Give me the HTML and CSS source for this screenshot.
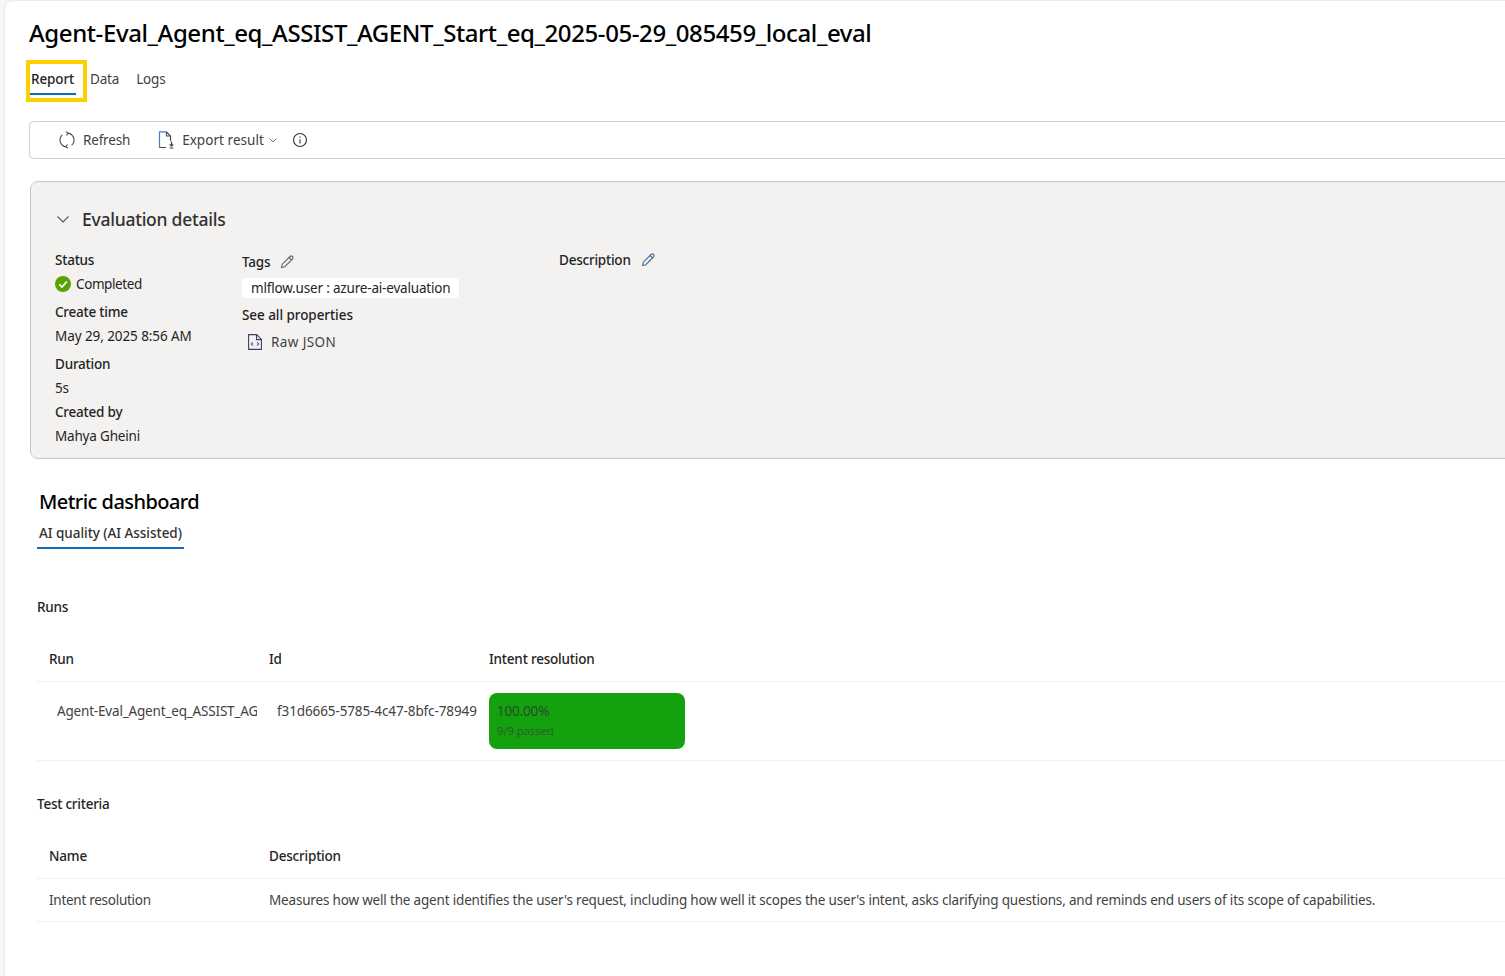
FILE: index.html
```html
<!DOCTYPE html>
<html lang="en">
<head>
<meta charset="utf-8">
<title>Evaluation report</title>
<link rel="stylesheet" href="styles.css">
</head>
<body>
<main class="card">
  <h1 class="title">Agent-Eval_Agent_eq_ASSIST_AGENT_Start_eq_2025-05-29_085459_local_eval</h1>
  <nav class="tabs">
    <a class="tab tab-active">Report</a>
    <a class="tab">Data</a>
    <a class="tab">Logs</a>
  </nav>
  <div class="toolbar">
    <span class="tool tool-refresh">
      <svg width="18" height="18" viewBox="0 0 18 18" fill="none" stroke="#4d4d4d" stroke-width="1.100"><path d="M10 2.100A7 7 0 0 1 13.700 14.200M8 15.900A7 7 0 0 1 4.300 3.800"/><path d="M7.800.6l2.300 1.500-1.600 2.400M10.200 17.400l-2.300-1.500 1.600-2.400"/></svg>
      <span>Refresh</span>
    </span>
    <span class="tool tool-export">
      <svg width="17" height="18" viewBox="0 0 17 18" fill="none" stroke-width="1.200"><path d="M1.500 16.500V.8h7" stroke="#3f7fc4"/><path d="M1.500 16.500H8M8.500.8 12.500 5v5M8.500.8V5h4" stroke="#4d4d4d"/><path d="M13.500 10.500v4.500M11.700 13.300l1.800 1.800 1.800-1.800M11.500 17h4" stroke="#444"/></svg>
      <span class="export-text">Export result</span>
      <svg class="chev" width="10" height="10" viewBox="0 0 10 10" fill="none" stroke="#777"><path d="M1.500 3.500 5 7l3.500-3.500"/></svg>
    </span>
    <svg class="info" width="16" height="16" viewBox="0 0 16 16" fill="none" stroke="#333" stroke-width="1.100"><circle cx="8" cy="8" r="6.500"/><path d="M8 7.200V11.500M8 4.500v1.300"/></svg>
  </div>
  <section class="details">
    <h2 class="details-head">
      <svg width="14" height="14" viewBox="0 0 14 14" fill="none" stroke="#555" stroke-width="1.100"><path d="M1.500 4.500 7 10l5.500-5.500"/></svg>
      <span>Evaluation details</span>
    </h2>
    <div class="details-cols">
      <div class="col col-status">
        <div class="label">Status</div>
        <div class="value status"><svg width="16" height="16" viewBox="0 0 16 16"><circle cx="8" cy="8" r="8" fill="#57a300"/><path d="M4.300 8.300 7 11l4.800-5.400" fill="none" stroke="#fff" stroke-width="1.700"/></svg><span class="completed">Completed</span></div>
        <div class="label label-gap">Create time</div>
        <div class="value value-date">May 29, 2025 8:56 AM</div>
        <div class="label label-gap">Duration</div>
        <div class="value">5s</div>
        <div class="label label-near">Created by</div>
        <div class="value">Mahya Gheini</div>
      </div>
      <div class="col col-tags">
        <div class="label label-edit">Tags <svg width="14" height="14" viewBox="0 0 14 14" fill="none" stroke="#5f6b78" stroke-width="1.100"><path d="M1.500 12.500l.8-3.300L10 1.500a1.400 1.400 0 0 1 2.500 2.500l-7.700 7.700zM9 2.500l2.500 2.500"/></svg></div>
        <div class="chip">mlflow.user : azure-ai-evaluation</div>
        <div class="label label-props">See all properties</div>
        <div class="raw"><svg width="14" height="16" viewBox="0 0 14 16" fill="none" stroke="#4b3867" stroke-width="1.100"><path d="M.6.600h8l4.800 4.800v10H.6zM8.500.600v5h5"/><path d="M5 8.300 3.200 10 5 11.700M9 8.300l1.800 1.700L9 11.700" stroke="#3f6fa8"/></svg><span>Raw JSON</span></div>
      </div>
      <div class="col col-desc">
        <div class="label label-edit label-desc">Description <svg width="14" height="14" viewBox="0 0 14 14" fill="none" stroke="#4a6f9c" stroke-width="1.100"><path d="M1.500 12.500l.8-3.300L10 1.500a1.400 1.400 0 0 1 2.500 2.500l-7.700 7.700zM9 2.500l2.500 2.500"/></svg></div>
      </div>
    </div>
  </section>
  <section class="metrics">
    <h2 class="metrics-title">Metric dashboard</h2>
    <div class="subtab">AI quality (AI Assisted)</div>
    <h3 class="table-title table-title-runs">Runs</h3>
    <div class="row row-head"><div class="cell cell-col">Run</div><div class="cell cell-col">Id</div><div class="cell">Intent resolution</div></div>
    <div class="row row-run">
      <div class="cell cell-clip">Agent-Eval_Agent_eq_ASSIST_AG</div>
      <div class="cell cell-clip cell-id">f31d6665-5785-4c47-8bfc-78949</div>
      <div class="cell cell-score"><div class="score"><span class="pct">100.00%</span><span class="passed">9/9 passed</span></div></div>
    </div>
    <h3 class="table-title table-title-criteria">Test criteria</h3>
    <div class="row row-head"><div class="cell cell-col">Name</div><div class="cell">Description</div></div>
    <div class="row row-crit"><div class="cell cell-col crit-name">Intent resolution</div><div class="cell">Measures how well the agent identifies the user's request, including how well it scopes the user's intent, asks clarifying questions, and reminds end users of its scope of capabilities.</div></div>
  </section>
</main>
</body>
</html>
```

FILE: styles.css
```css
*, *::before, *::after { box-sizing: border-box; }
html, body { margin: 0; height: 100%; overflow: hidden; }
body {
  background: #f7f7f7;
  font-family: "Noto Sans", "Open Sans", sans-serif;
  font-size: 13.5px;
  letter-spacing: -.18px;
  line-height: 20px;
  color: #242424;
  padding: 1px 0 0 5px;
}
.card {
  width: 1560px;
  height: 1000px;
  background: #fff;
  border-radius: 8px 0 0 0;
  box-shadow: 0 0 3px rgba(0, 0, 0, .12);
  padding: 16px 0 0 24px;
}
.title { margin: 0; font-size: 24px; line-height: 32px; font-weight: 550; color: #000; letter-spacing: -.4px; white-space: nowrap; }

.tabs { display: flex; margin-top: 11px; height: 35px; }
.tab { padding: 9px 0 0; color: #424242; margin-left: 14px; }
.tab + .tab + .tab { margin-left: 17px; }
.tab-active {
  position: relative;
  margin-left: 1px;
  width: 46px;
  padding-left: 1px;
  border-bottom: 2px solid #0f6cbd;
  font-weight: 550;
  letter-spacing: -.1px;
  color: #242424;
}
.tab-active::after {
  content: "";
  position: absolute;
  left: -4px;
  top: 0;
  width: 61px;
  height: 42px;
  border: 4px solid #ffd000;
}

.toolbar {
  display: flex;
  align-items: center;
  height: 38px;
  margin-top: 26px;
  padding-left: 28px;
  border: 1px solid #d1d1d1;
  border-radius: 4px 0 0 4px;
  color: #424242;
}
.tool { display: flex; align-items: center; }
.tool-refresh { gap: 7px; }
.tool-export { gap: 7px; margin-left: 28px; }
.export-text { letter-spacing: .05px; }
.chev { margin-left: -3px; }
.info { margin-left: 14px; }

.details {
  height: 278px;
  margin: 22px 0 0 1px;
  padding: 25px 0 0 24px;
  background: #f3f2f1;
  border: 1px solid #c8c6c4;
  border-radius: 8px 0 0 8px;
}
.details-head {
  display: flex;
  align-items: center;
  gap: 12px;
  height: 24px;
  margin: 0 0 19px;
  font-size: 17.5px;
  line-height: 23px;
  font-weight: 500;
  letter-spacing: -.25px;
  color: #323130;
}
.details-head svg { margin-left: 1px; }
.details-cols { display: flex; }
.col-status { width: 187px; }
.col-tags { width: 317px; }
.label { font-weight: 550; letter-spacing: -.22px; color: #242424; }
.label-gap { margin-top: 8px; }
.label-near { margin-top: 4px; }
.value { margin-top: 4px; white-space: nowrap; }
.value-date { letter-spacing: -.08px; }
.completed { letter-spacing: -.4px; }
.status { display: flex; align-items: center; gap: 5px; }
.label-edit { display: flex; align-items: center; gap: 10px; }
.col-tags .label-edit { margin-top: 2px; }
.chip {
  width: 217px;
  height: 20px;
  margin-top: 6px;
  padding-left: 9px;
  background: #fff;
  border-radius: 4px;
  white-space: nowrap;
}
.label-props { margin-top: 7px; letter-spacing: -.06px; }
.raw { display: flex; align-items: center; gap: 9px; margin: 7px 0 0 6px; color: #424242; letter-spacing: .4px; }

.metrics { margin: 29px 0 0 8px; }
.metrics-title { margin: 0 0 0 2px; font-size: 20px; line-height: 28px; font-weight: 550; letter-spacing: -.55px; color: #000; }
.subtab {
  width: 147px;
  height: 26px;
  margin-top: 7px;
  padding-left: 2px;
  border-bottom: 2px solid #0f6cbd;
  font-weight: 550;
  letter-spacing: -.04px;
  color: #323130;
  white-space: nowrap;
}
.table-title { margin: 0; font-size: 13.5px; line-height: 20px; font-weight: 550; letter-spacing: -.24px; color: #242424; }
.table-title-runs { margin-top: 48px; }
.table-title-criteria { margin-top: 33px; }
.row { display: flex; border-bottom: 1px solid #f0f0f0; color: #424242; }
.row-head { height: 45px; margin-top: 20px; padding-top: 12px; font-weight: 550; letter-spacing: -.2px; color: #242424; }
.row-run { height: 79px; }
.row-crit { height: 43px; padding-top: 11px; }
.crit-name { letter-spacing: -.27px; }
.cell { padding-left: 12px; white-space: nowrap; }
.cell-col { width: 220px; flex: none; }
.cell-clip { width: 220px; flex: none; padding: 19px 0 0 20px; overflow: hidden; }
.cell-id { letter-spacing: -.11px; }
.cell-score { padding-top: 11px; }
.score {
  display: flex;
  flex-direction: column;
  width: 196px;
  height: 56px;
  padding: 8px 0 0 8px;
  background: #13a10e;
  border-radius: 8px;
}
.pct { color: #2b4a28; }
.passed { margin-top: 2px; font-size: 11.5px; line-height: 16px; color: #2f5f2c; }
```
